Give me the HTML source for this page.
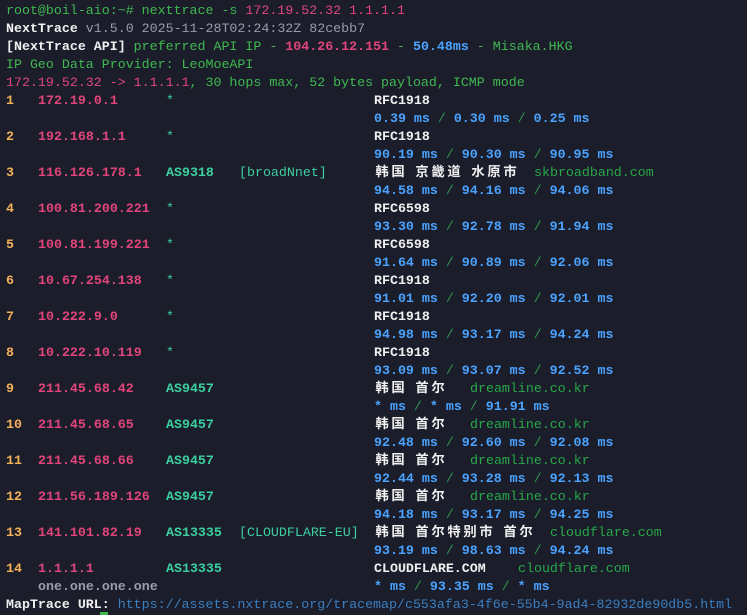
<!DOCTYPE html>
<html><head><meta charset="utf-8"><style>
body{margin:0;background:#1b1d2a;width:747px;height:615px;overflow:hidden;font-family:"Liberation Mono","Noto Sans CJK SC",monospace;font-size:13.3px;}
.l{position:absolute;height:18px;line-height:18px;white-space:pre;}
b{font-weight:bold}
.g{color:#3fb950}.p{color:#e2457b}.w{color:#f0f0f0;font-weight:bold}.gr{color:#9a9cab}
.h{color:#f5b05a;font-weight:bold}.ip{color:#e2457b;font-weight:bold}.as{color:#3ccfa0;font-weight:bold}
.ms{color:#4aa3ff;font-weight:bold}.sl{color:#2c9a4a}.dm{color:#27a84a}.u{color:#3b7fc0}.cj{color:#f0f0f0;font-weight:bold}
.c{display:inline-block;width:16px;text-align:center}
</style></head><body>
<div class="l" style="top:2px;left:6px"><span class="g">root@boil-aio:~# nexttrace -s </span><span class="p">172.19.52.32 1.1.1.1</span></div>
<div class="l" style="top:20px;left:6px"><span class="w">NextTrace</span><span class="gr"> v1.5.0 2025-11-28T02:24:32Z 82cebb7</span></div>
<div class="l" style="top:38px;left:6px"><span class="w">[NextTrace API]</span><span class="g"> preferred API IP - </span><b class="p">104.26.12.151</b><span class="g"> - </span><b style="color:#4aa3ff">50.48ms</b><span class="g"> - Misaka.HKG</span></div>
<div class="l" style="top:56px;left:6px"><span class="g">IP Geo Data Provider: LeoMoeAPI</span></div>
<div class="l" style="top:74px;left:6px"><span class="p">172.19.52.32 -&gt; 1.1.1.1</span><span class="g">, 30 hops max, 52 bytes payload, ICMP mode</span></div>
<div id="rows"></div>
<script>
var rows=[
["1","172.19.0.1","*","","RFC1918","","0.39","0.30","0.25"],
["2","192.168.1.1","*","","RFC1918","","90.19","90.30","90.95"],
["3","116.126.178.1","AS9318","[broadNnet]","韩国 京畿道 水原市","skbroadband.com","94.58","94.16","94.06"],
["4","100.81.200.221","*","","RFC6598","","93.30","92.78","91.94"],
["5","100.81.199.221","*","","RFC6598","","91.64","90.89","92.06"],
["6","10.67.254.138","*","","RFC1918","","91.01","92.20","92.01"],
["7","10.222.9.0","*","","RFC1918","","94.98","93.17","94.24"],
["8","10.222.10.119","*","","RFC1918","","93.09","93.07","92.52"],
["9","211.45.68.42","AS9457","","韩国 首尔","dreamline.co.kr","*","*","91.91"],
["10","211.45.68.65","AS9457","","韩国 首尔","dreamline.co.kr","92.48","92.60","92.08"],
["11","211.45.68.66","AS9457","","韩国 首尔","dreamline.co.kr","92.44","93.28","92.13"],
["12","211.56.189.126","AS9457","","韩国 首尔","dreamline.co.kr","94.18","93.17","94.25"],
["13","141.101.82.19","AS13335","[CLOUDFLARE-EU]","韩国 首尔特别市 首尔","cloudflare.com","93.19","98.63","94.24"],
["14","1.1.1.1","AS13335","","CLOUDFLARE.COM","cloudflare.com","*","93.35","*"]];
var dx={3:534,9:470,10:470,11:470,12:470,13:550,14:518};
function cj(s){return s.replace(/[^\x00-\x7f]/g,function(c){return '<span class="c">'+c+'</span>';});}
var h="";
rows.forEach(function(r,i){
 var t=92+i*36,n=+r[0];
 h+='<div class="l h" style="top:'+t+'px;left:6px">'+r[0]+'</div>';
 h+='<div class="l ip" style="top:'+t+'px;left:38px">'+r[1]+'</div>';
 h+='<div class="l as" style="top:'+t+'px;left:166px'+(r[2]=="*"?';font-weight:normal':'')+'">'+r[2]+'</div>';
 if(r[3])h+='<div class="l as" style="top:'+t+'px;left:239px;font-weight:normal">'+r[3]+'</div>';
 h+='<div class="l cj" style="top:'+t+'px;left:374px">'+cj(r[4])+'</div>';
 if(r[5])h+='<div class="l dm" style="top:'+t+'px;left:'+(dx[n]||534)+'px">'+r[5]+'</div>';
 h+='<div class="l" style="top:'+(t+18)+'px;left:374px"><span class="ms">'+r[6]+' ms</span><span class="sl"> / </span><span class="ms">'+r[7]+' ms</span><span class="sl"> / </span><span class="ms">'+r[8]+' ms</span></div>';
 if(n==14)h+='<div class="l gr" style="top:'+(t+18)+'px;left:38px;font-weight:bold">one.one.one.one</div>';
});
document.getElementById("rows").innerHTML=h;
</script>
<div class="l" style="top:596px;left:6px"><span class="w">MapTrace URL: </span><span class="u">https://assets.nxtrace.org/tracemap/c553afa3-4f6e-55b4-9ad4-82932de90db5.html</span></div>
<div style="position:absolute;left:100px;top:612px;width:8px;height:3px;background:#3fb950"></div>
</body></html>
